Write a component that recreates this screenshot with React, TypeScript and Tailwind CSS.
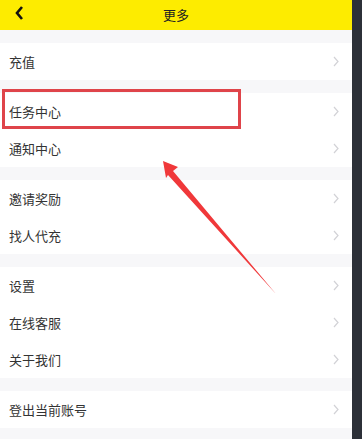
import React from "react";

const groups = [
  ["充值"],
  ["任务中心", "通知中心"],
  ["邀请奖励", "找人代充"],
  ["设置", "在线客服", "关于我们"],
  ["登出当前账号"],
];

function Chevron() {
  return (
    <svg width="6" height="11" viewBox="0 0 6 11" fill="none">
      <path d="M1 1l4 4.5-4 4.5" stroke="#d2d2d6" strokeWidth="1.2" />
    </svg>
  );
}

export default function App() {
  return (
    <div
      className="flex h-[439px] w-[362px] overflow-hidden bg-[#2c3038]"
      style={{ fontFamily: '"Noto Sans CJK SC", "Noto Sans", sans-serif' }}
    >
      <div className="relative flex w-[352px] flex-col bg-[#f7f7f9]">
        <div className="relative flex h-[30px] items-center justify-center bg-[#fdec00]">
          <svg
            className="absolute left-[14px] top-[5px]"
            width="10"
            height="16"
            viewBox="0 0 10 16"
            fill="none"
          >
            <path d="M8 2L3 8l5 6" stroke="#111" strokeWidth="2.6" />
          </svg>
          <span className="text-[13px] text-[#222]">更多</span>
        </div>

        <div className="flex flex-col gap-[13px] pt-[13px]">
          {groups.map((g, i) => (
            <div key={i} className="flex flex-col bg-white">
              {g.map((label) => (
                <div
                  key={label}
                  className="flex h-[37px] items-center justify-between pl-[9px] pr-[13px]"
                >
                  <span className="text-[13px] text-[#333]">{label}</span>
                  <Chevron />
                </div>
              ))}
            </div>
          ))}
        </div>

        {/* annotation: red box + arrow */}
        <div className="absolute left-[2px] top-[89px] h-[40px] w-[239px] border-[3px] border-[#df444a]" />
        <svg
          className="absolute left-0 top-0"
          width="352"
          height="439"
          viewBox="0 0 352 439"
        >
          <path
            d="M163 161 L178 167 L173 171 L276 294 L168 175 L166 178 Z"
            fill="#f0383a"
          />
        </svg>
      </div>
    </div>
  );
}
